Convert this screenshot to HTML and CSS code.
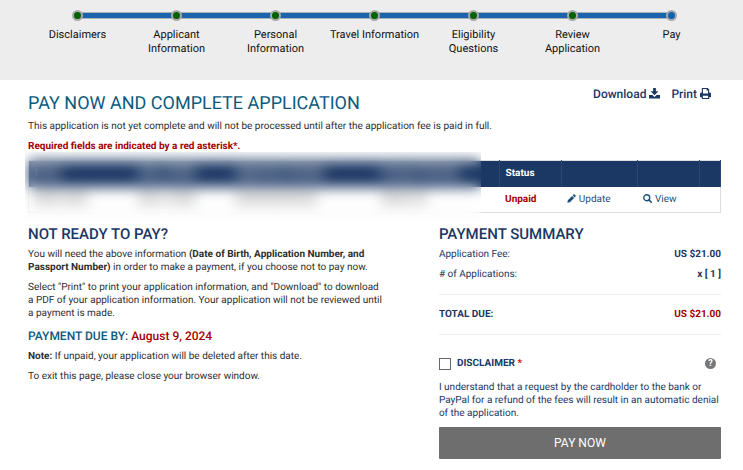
FILE: index.html
```html
<!DOCTYPE html>
<html lang="en">
<head>
    <meta charset="UTF-8">
    <meta name="viewport" content="width=device-width, initial-scale=1.0">
    <title>Pay Now and Complete Application</title>
    <link rel="stylesheet" href="styles.css">
</head>
<body>

<header class="progress">
    <ol class="steps">
        <li class="step done">Disclaimers</li>
        <li class="step done">Applicant<br>Information</li>
        <li class="step done">Personal<br>Information</li>
        <li class="step done">Travel Information</li>
        <li class="step done">Eligibility<br>Questions</li>
        <li class="step done">Review<br>Application</li>
        <li class="step current">Pay</li>
    </ol>
</header>

<main class="page">
    <div class="title-row">
        <h1>PAY NOW AND COMPLETE APPLICATION</h1>
        <nav class="tools">
            <a href="#download">Download
                <svg class="icon-tool" viewBox="0 0 12 12"><path d="M4.500 0h3v3.500h2.700L6 7.800 1.800 3.500H4.500z"/><path d="M0 7.600h3.700L6 9.700l2.300-2.100H12V11.500H0z"/></svg>
            </a>
            <a href="#print">Print
                <svg class="icon-tool" viewBox="0 0 12 12"><path fill-rule="evenodd" d="M2 0h6.500L10 1.500V5h.5A1.500 1.500 0 0 1 12 6.500V10h-2v2H2v-2H0V6.500A1.500 1.500 0 0 1 1.500 5H2zM3.200 1.200V6h5.600V2.800H7.200V1.200zM3.200 8.500v2.300h5.600V8.500z"/></svg>
            </a>
        </nav>
    </div>
    <p>This application is not yet complete and will not be processed until after the application fee is paid in full.</p>
    <p class="required">Required fields are indicated by a red asterisk*.</p>

    <div class="table-wrap">
        <table class="applications">
            <colgroup>
                <col class="col-name">
                <col class="col-birth">
                <col class="col-number">
                <col class="col-passport">
                <col class="col-status">
                <col class="col-update">
                <col class="col-view">
                <col class="col-end">
            </colgroup>
            <thead>
                <tr>
                    <th>Name</th>
                    <th>Date of Birth</th>
                    <th>Application Number</th>
                    <th>Passport Number</th>
                    <th>Status</th>
                    <th></th>
                    <th></th>
                    <th></th>
                </tr>
            </thead>
            <tbody>
                <tr>
                    <td>XXXX XXXX</td>
                    <td>XXX X, XXXX</td>
                    <td>XXXXXXXXXXXXX</td>
                    <td>XXXXX XX</td>
                    <td class="unpaid">Unpaid</td>
                    <td>
                        <a href="#update"><svg class="icon-row" viewBox="0 0 12 12"><path d="M8.700.6a1 1 0 0 1 1.400 0l1.300 1.300a1 1 0 0 1 0 1.400l-1.200 1.200-2.700-2.700zM6.800 2.500l2.700 2.700-5.700 5.700L.5 11.500l.6-3.300z"/></svg> Update</a>
                    </td>
                    <td>
                        <a href="#view"><svg class="icon-row" viewBox="0 0 12 12"><circle cx="5" cy="5" r="4" fill="none" stroke="currentColor" stroke-width="1.800"/><path d="M8 8l3 3" stroke="currentColor" stroke-width="2.200" stroke-linecap="round"/></svg> View</a>
                    </td>
                    <td></td>
                </tr>
            </tbody>
        </table>
        <div class="privacy"></div>
    </div>

    <div class="columns">
        <section>
            <h2>NOT READY TO PAY?</h2>
            <p>You will need the above information <strong>(Date of Birth, Application Number, and Passport Number)</strong> in order to make a payment, if you choose not to pay now.</p>
            <p>Select "Print" to print your application information, and "Download" to download a PDF of your application information. Your application will not be reviewed until a payment is made.</p>
            <h3>PAYMENT DUE BY: <span class="due">August 9, 2024</span></h3>
            <p><strong>Note:</strong> If unpaid, your application will be deleted after this date.</p>
            <p>To exit this page, please close your browser window.</p>
        </section>

        <section class="summary">
            <h2>PAYMENT SUMMARY</h2>
            <dl>
                <div class="line"><dt>Application Fee:</dt><dd>US $21.00</dd></div>
                <div class="line"><dt># of Applications:</dt><dd>x [ 1 ]</dd></div>
                <div class="line total"><dt>TOTAL DUE:</dt><dd>US $21.00</dd></div>
            </dl>
            <form>
                <div class="agree">
                    <input type="checkbox" id="disclaimer">
                    <label for="disclaimer">DISCLAIMER <span class="star">*</span></label>
                    <button type="button" class="help" aria-label="Help">?</button>
                </div>
                <p>I understand that a request by the cardholder to the bank or PayPal for a refund of the fees will result in an automatic denial of the application.</p>
                <button type="button" class="pay">PAY NOW</button>
            </form>
        </section>
    </div>
</main>

</body>
</html>
```

FILE: styles.css
```css
*, *::before, *::after {
    box-sizing: border-box;
}
body {
    margin: 0;
    font-family: Roboto, Arial, sans-serif;
    font-size: 10px;
    line-height: 13px;
    color: #2e2e2e;
    background-color: #fff;
    text-rendering: geometricPrecision;
}
h1, h2, h3, p, dl, dd {
    margin: 0;
}
a {
    color: #1b4f7a;
    text-decoration: none;
}
svg {
    fill: currentColor;
}

/* Progress bar */
.progress {
    height: 80px;
    padding: 10px 22px 0 28px;
    background-color: #ededed;
}
.steps {
    display: grid;
    grid-template-columns: repeat(7, 1fr);
    margin: 0;
    padding: 0;
    list-style: none;
    font-size: 11px;
    line-height: 14px;
    color: #111;
    text-align: center;
}
.step {
    position: relative;
    white-space: nowrap;
}
.step::before {
    content: "";
    display: block;
    position: relative;
    z-index: 1;
    width: 11px;
    height: 11px;
    margin: 0 auto 7px;
    border: 2px solid #aaa;
    border-radius: 50%;
    background-color: #006100;
}
.step.current::before {
    background-color: #1261ae;
}
.step:not(:last-child)::after {
    content: "";
    position: absolute;
    top: 2px;
    left: 50%;
    width: 100%;
    height: 7px;
    border: solid #a9b4bd;
    border-width: 1px 0;
    background-color: #1b63ad;
}

/* Content */
.page {
    padding: 6px 22px 10px 28px;
}
.title-row {
    display: flex;
    justify-content: space-between;
    margin-bottom: 5px;
}
h1 {
    padding-top: 7px;
    font-size: 18px;
    line-height: 22px;
    font-weight: 400;
    color: #0b5a7c;
}
.tools {
    display: flex;
    gap: 11px;
    padding-right: 10px;
    font-size: 12px;
    line-height: 16px;
    font-weight: 500;
}
.tools a {
    color: #1b3764;
}
.icon-tool {
    width: 11px;
    height: 11px;
    vertical-align: -1px;
}
p {
    margin-bottom: 7px;
}
.required {
    font-weight: 700;
    color: #a30000;
}

/* Applications table */
.table-wrap {
    position: relative;
    margin-bottom: 12px;
}
.applications {
    width: 100%;
    table-layout: fixed;
    border-collapse: collapse;
    border: 1px solid #ddd;
}
.col-name { width: 15%; }
.col-birth { width: 14%; }
.col-number { width: 21%; }
.col-passport { width: 18%; }
.col-status { width: 9%; }
.col-update { width: 11%; }
.col-view { width: 9%; }
.col-end { width: 3%; }
.applications th, .applications td {
    height: 26px;
    padding: 0 6px;
    text-align: left;
    white-space: nowrap;
}
.applications th {
    border-right: 1px solid #2b4671;
    background-color: #1b3764;
    color: #fff;
}
.applications .unpaid {
    font-weight: 700;
    color: #a30000;
}
.icon-row {
    width: 9px;
    height: 9px;
    vertical-align: -1px;
}
/* Hides the personal details */
.privacy {
    position: absolute;
    top: -8px;
    bottom: -8px;
    left: -3px;
    right: 240px;
    backdrop-filter: blur(7px);
}

/* Lower columns */
.columns {
    display: grid;
    grid-template-columns: 39fr 31fr;
    column-gap: 56px;
}
h2 {
    margin-bottom: 5px;
    font-size: 15px;
    line-height: 18px;
    font-weight: 500;
    color: #1b3764;
}
h3 {
    margin: 8px 0 6px;
    font-size: 12px;
    line-height: 16px;
    font-weight: 500;
    color: #0b5a7c;
}
.due {
    color: #a30000;
}
.summary {
    color: #1b3764;
}
.line {
    display: flex;
    justify-content: space-between;
    margin-bottom: 7px;
}
.line dd {
    font-weight: 700;
}
.line.total {
    margin: 13px 0 22px;
    padding: 13px 0;
    border: solid #eee;
    border-width: 1px 0;
    font-weight: 700;
}
.total dd {
    color: #a30000;
}
.agree {
    display: flex;
    align-items: center;
    gap: 6px;
    margin-bottom: 11px;
}
.agree input {
    appearance: none;
    width: 12px;
    height: 12px;
    margin: 0;
    border: 1px solid #666;
    background-color: #fff;
}
.agree input:checked {
    background-color: #1b3764;
}
.agree label {
    font-weight: 700;
}
.star {
    color: #e00000;
}
.help {
    width: 11px;
    height: 11px;
    margin: 0 5px 0 auto;
    padding: 0;
    border: none;
    border-radius: 50%;
    background-color: #777;
    color: #fff;
    font: 700 9px/11px Roboto, Arial, sans-serif;
}
.pay {
    width: 100%;
    height: 32px;
    border: none;
    border-radius: 1px;
    background-color: #6e6e6e;
    color: #fff;
    font: 400 12px Roboto, Arial, sans-serif;
    cursor: pointer;
}
```
